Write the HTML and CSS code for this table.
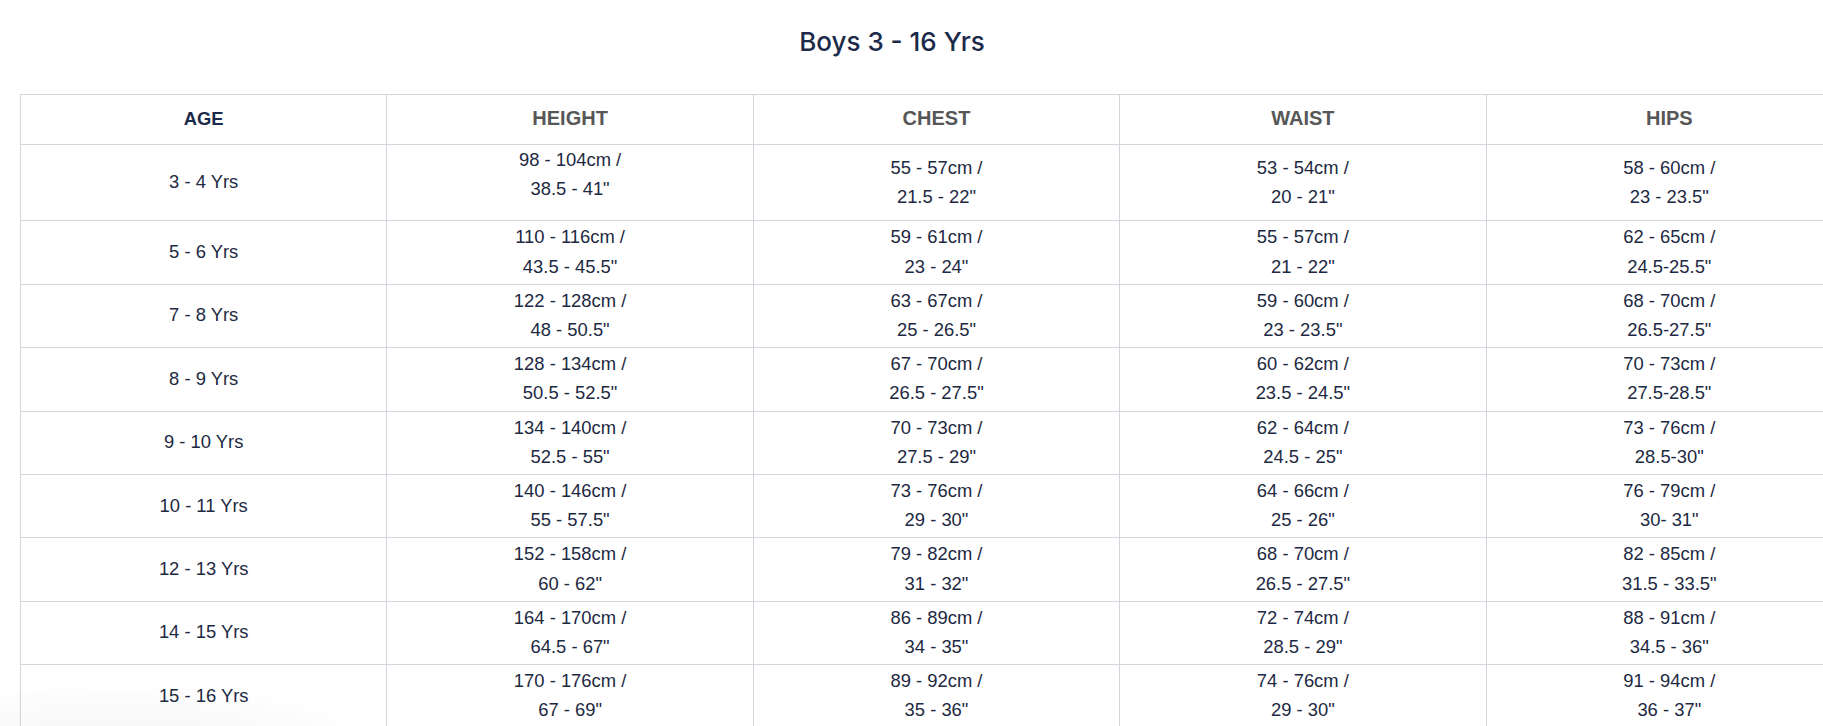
FILE: index.html
```html
<!DOCTYPE html>
<html lang="en">
<head>
<meta charset="utf-8">
<title>Boys 3 - 16 Yrs</title>
<link rel="stylesheet" href="styles.css">
</head>
<body>
<div class="page">
  <h1 class="title">Boys 3 - 16 Yrs</h1>
  <table class="size-table">
    <thead>
      <tr>
        <th class="head-age">AGE</th>
        <th>HEIGHT</th>
        <th>CHEST</th>
        <th>WAIST</th>
        <th>HIPS</th>
      </tr>
    </thead>
    <tbody>
      <tr>
        <td>3 - 4 Yrs</td>
        <td class="cell-extra">98 - 104cm /<br>38.5 - 41"</td>
        <td>55 - 57cm /<br>21.5 - 22"</td>
        <td>53 - 54cm /<br>20 - 21"</td>
        <td>58 - 60cm /<br>23 - 23.5"</td>
      </tr>
      <tr>
        <td>5 - 6 Yrs</td>
        <td>110 - 116cm /<br>43.5 - 45.5"</td>
        <td>59 - 61cm /<br>23 - 24"</td>
        <td>55 - 57cm /<br>21 - 22"</td>
        <td>62 - 65cm /<br>24.5-25.5"</td>
      </tr>
      <tr>
        <td>7 - 8 Yrs</td>
        <td>122 - 128cm /<br>48 - 50.5"</td>
        <td>63 - 67cm /<br>25 - 26.5"</td>
        <td>59 - 60cm /<br>23 - 23.5"</td>
        <td>68 - 70cm /<br>26.5-27.5"</td>
      </tr>
      <tr>
        <td>8 - 9 Yrs</td>
        <td>128 - 134cm /<br>50.5 - 52.5"</td>
        <td>67 - 70cm /<br>26.5 - 27.5"</td>
        <td>60 - 62cm /<br>23.5 - 24.5"</td>
        <td>70 - 73cm /<br>27.5-28.5"</td>
      </tr>
      <tr>
        <td>9 - 10 Yrs</td>
        <td>134 - 140cm /<br>52.5 - 55"</td>
        <td>70 - 73cm /<br>27.5 - 29"</td>
        <td>62 - 64cm /<br>24.5 - 25"</td>
        <td>73 - 76cm /<br>28.5-30"</td>
      </tr>
      <tr>
        <td>10 - 11 Yrs</td>
        <td>140 - 146cm /<br>55 - 57.5"</td>
        <td>73 - 76cm /<br>29 - 30"</td>
        <td>64 - 66cm /<br>25 - 26"</td>
        <td>76 - 79cm /<br>30- 31"</td>
      </tr>
      <tr>
        <td>12 - 13 Yrs</td>
        <td>152 - 158cm /<br>60 - 62"</td>
        <td>79 - 82cm /<br>31 - 32"</td>
        <td>68 - 70cm /<br>26.5 - 27.5"</td>
        <td>82 - 85cm /<br>31.5 - 33.5"</td>
      </tr>
      <tr>
        <td>14 - 15 Yrs</td>
        <td>164 - 170cm /<br>64.5 - 67"</td>
        <td>86 - 89cm /<br>34 - 35"</td>
        <td>72 - 74cm /<br>28.5 - 29"</td>
        <td>88 - 91cm /<br>34.5 - 36"</td>
      </tr>
      <tr>
        <td>15 - 16 Yrs</td>
        <td>170 - 176cm /<br>67 - 69"</td>
        <td>89 - 92cm /<br>35 - 36"</td>
        <td>74 - 76cm /<br>29 - 30"</td>
        <td>91 - 94cm /<br>36 - 37"</td>
      </tr>
    </tbody>
  </table>
</div>
<div class="corner-shade"></div>
</body>
</html>
```
FILE: styles.css
```css
html, body {
  margin: 0;
  padding: 0;
  background: #ffffff;
  overflow: hidden;
}

.page {
  padding-left: 20px;
  width: 1823px;
  box-sizing: border-box;
}

.title {
  margin: 24px 0 34px 0;
  padding-right: 59px;
  text-align: center;
  font-family: Inter, "Noto Sans", sans-serif;
  font-weight: 500;
  font-size: 26px;
  line-height: 36px;
  color: #1c2a4a;
}

.size-table {
  border-collapse: collapse;
  table-layout: fixed;
  width: 1833px;
  font-family: "Liberation Sans", Arial, sans-serif;
  font-size: 18.4px;
  color: #1d2942;
}

.size-table th,
.size-table td {
  border: 1px solid #d2d6de;
  text-align: center;
  vertical-align: middle;
  width: 20%;
}

.size-table th {
  padding: 9px 10px 11px;
  line-height: 29px;
  font-size: 20px;
  font-weight: bold;
  color: #575757;
}

.size-table th.head-age {
  font-size: 18.4px;
  color: #1c2a4a;
}

.size-table td {
  padding: 1px 10px 3px;
  line-height: 29.2px;
}

.size-table td.cell-extra {
  padding-top: 0;
  padding-bottom: 17px;
}

.corner-shade {
  position: fixed;
  left: -120px;
  bottom: -60px;
  width: 480px;
  height: 100px;
  border-radius: 50%;
  background: radial-gradient(ellipse at center, rgba(0, 0, 0, 0.03) 0%, rgba(0, 0, 0, 0.015) 50%, rgba(0, 0, 0, 0) 75%);
  pointer-events: none;
}
```
